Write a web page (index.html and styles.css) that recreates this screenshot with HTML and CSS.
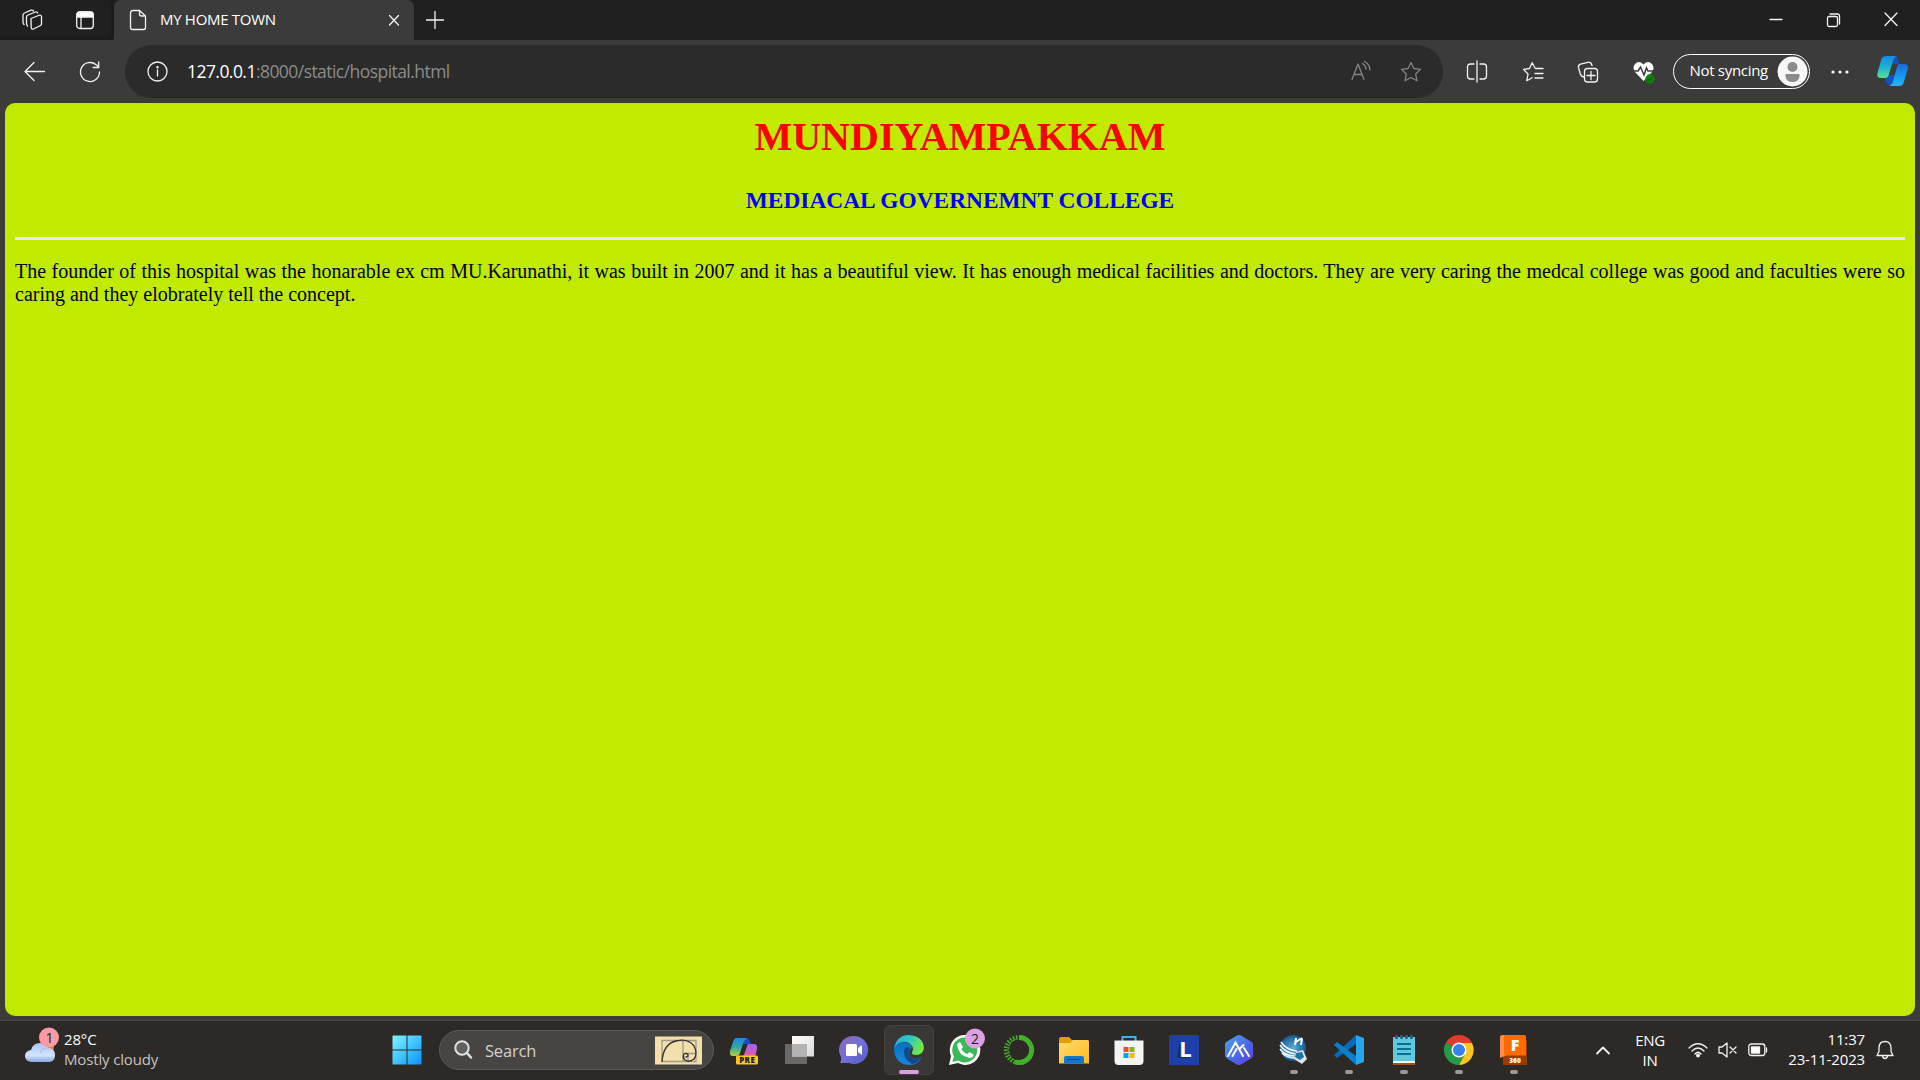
FILE: index.html
```html
<!DOCTYPE html>
<html lang="en">
<head>
<meta charset="utf-8">
<title>MY HOME TOWN</title>
<link rel="stylesheet" href="styles.css">
</head>
<body>
<div class="screen">
  <header class="tabstrip">
    <div class="strip-tools">
      <svg class="ic" width="24" height="24" viewBox="0 0 24 24"><path d="M10 10.500 17.500 7.500Q20 6.500 20.500 8.500V16Q20.500 17 19.500 17.500L12.500 21Q10.500 21.700 10.200 19.500ZM6.500 18Q5.500 17 5.500 15V9Q5.500 7.500 7 7L14.500 4Q16 3.500 16.700 5M3 16.500Q2 15.500 2 13.500V7Q2 5.500 3.500 5L10 2.200Q11.500 1.700 12.500 3"/></svg>
      <svg class="ic" width="20" height="20" viewBox="0 0 20 20"><rect x="1.700" y="2" width="16.600" height="16.500" rx="3"/><path d="M6 6v12"/><path class="solid" d="M2 7V4.500Q2 2 4.500 2h11Q18 2 18 4.500V7z"/></svg>
    </div>
    <div class="tab">
      <svg class="ic" width="18" height="22" viewBox="0 0 18 22"><path d="M4 1.500h6.500L16.500 7v11.500q0 2-2 2H3.500q-2 0-2-2V4q0-2.500 2.500-2.500zM10.500 1.500V5q0 2 2 2h4"/></svg>
      <span class="tab-title">MY HOME TOWN</span>
      <svg class="ic" width="12" height="12" viewBox="0 0 12 12"><path d="m1.500 1.500 9 9.500M10.500 1.500 1.500 11"/></svg>
    </div>
    <svg class="ic newtab" width="18" height="18" viewBox="0 0 18 18"><path d="M9 .5v17M.5 9h17"/></svg>
    <div class="window-buttons">
      <svg class="ic" width="14" height="14" viewBox="0 0 14 14"><path d="M1 6.500h12"/></svg>
      <svg class="ic" width="15" height="15" viewBox="0 0 15 15"><rect x="1.500" y="3.500" width="10" height="10" rx="1.500"/><path d="M4 1h7.500q2 0 2 2v8"/></svg>
      <svg class="ic" width="14" height="14" viewBox="0 0 14 14"><path d="m1 0 12 12.500M13 0 1 12.500"/></svg>
    </div>
  </header>

  <nav class="toolbar">
    <svg class="ic back" width="22" height="20" viewBox="0 0 22 20"><path d="M10 .5 1 9.500l9 9M1 9.500h19.500"/></svg>
    <svg class="ic refresh" width="22" height="22" viewBox="0 0 22 22"><path d="M20.500 11a9.500 9.500 0 1 1-3.300-7.200l2.300 2M19.700 1v5.500h-5.500"/></svg>
    <div class="address">
      <svg class="ic" width="22" height="22" viewBox="0 0 22 22"><circle cx="11.500" cy="10.500" r="9.500"/><path d="M11.500 9v6"/><circle class="solid" cx="11.500" cy="6.200" r=".6"/></svg>
      <div class="url"><span class="host">127.0.0.1</span>:8000/static/hospital.html</div>
      <svg class="ic dim read" width="22" height="22" viewBox="0 0 22 22"><path d="M2 18.500 8 3l6 15.500M4 13.500h8M12.500 2.500q3 1.500 3.500 5.500M14.500 .5q5 2.500 5.500 8.500"/></svg>
      <svg class="ic dim" width="22" height="22" viewBox="0 0 22 22"><path d="m11 1.500 2.900 6 6.600.900-4.800 4.600 1.200 6.700L11 16.500l-5.900 3.200 1.200-6.700L1.500 8.400l6.600-.900z"/></svg>
    </div>
    <div class="tools">
      <svg class="ic" width="22" height="22" viewBox="0 0 22 22"><path d="M8 3H4.500Q1.500 3 1.500 6v9q0 3 3 3H8M14 3h3.500q3 0 3 3v9q0 3-3 3H14M11 0v21"/></svg>
      <svg class="ic" width="22" height="22" viewBox="0 0 22 22"><path d="m13 7-2.800-5.200L7.500 7.500 1.500 8.400 6 13l-1.200 6.700 5.400-3M13.500 7.500H21M13 12.500h8M13 17h8"/></svg>
      <svg class="ic" width="22" height="22" viewBox="0 0 22 22"><rect x="7.500" y="7.500" width="13" height="13.500" rx="3"/><path d="M14 10.500v8M10 14.500h8M7 16Q4 15.500 3.300 13L1.500 6.500Q1 4 3.500 3.200L11 1.300q3-.600 4 3.200"/></svg>
      <svg class="heart" width="22" height="24" viewBox="0 0 22 24"><path fill="#fff" d="M10.500 21 2 12Q-1 7 2 4q4-4 8.500.5Q15 0 19 4q3 4 0 8z"/><path fill="none" stroke="#3b3b3b" stroke-width="1.500" d="M0 11h5l2.500-4 3.500 8 2.500-7 1.500 3H22"/><circle cx="17" cy="19" r="4.700" fill="#107c10"/><path d="m15 19 1.500 1.500 3-3" fill="none" stroke="#052"/></svg>
    </div>
    <div class="profile"><span>Not syncing</span>
      <svg width="31" height="31" viewBox="0 0 31 31"><circle cx="15.500" cy="15.500" r="15" fill="#f7f7f7"/><circle cx="15.500" cy="11" r="5" fill="#8b8b8b"/><path fill="#8b8b8b" d="M8.500 18h14v2.500q-1 5.500-7 5.500t-7-5.500z"/></svg>
    </div>
    <svg class="more" width="18" height="6" viewBox="0 0 18 6"><g fill="#fff"><circle cx="2" cy="3" r="1.600"/><circle cx="9" cy="3" r="1.600"/><circle cx="16" cy="3" r="1.600"/></g></svg>
    <svg class="copilot" width="32" height="30" viewBox="0 0 32 30">
      <defs>
        <linearGradient id="ca" x1="0" y1="0" x2="0" y2="1"><stop offset="0" stop-color="#1689e0"/><stop offset=".5" stop-color="#17b3d3"/><stop offset="1" stop-color="#63df8c"/></linearGradient>
        <linearGradient id="cb" x1="0" y1="0" x2="0" y2="1"><stop offset="0" stop-color="#1a6bdc"/><stop offset="1" stop-color="#18bcfa"/></linearGradient>
      </defs>
      <path fill="#1452c4" d="M8 19h10l-3 8q-1 2-3 2-3-1-4-6zM17 0q4 0 5 8h-7z"/>
      <path fill="url(#ca)" d="M9 0h11q-3 1-4 5l-4 13q-1 4-4 4H4q-5 0-3.500-5L4 4.500Q5 0 9 0z"/>
      <path fill="url(#cb)" d="M22 8h5q5 0 3.700 5L27 25.500Q26 30 22 30H12q3-1 4-5l4-14q.5-3 2-3z"/>
    </svg>
  </nav>

  <main class="page">
    <h1>MUNDIYAMPAKKAM</h1>
    <h3>MEDIACAL GOVERNEMNT COLLEGE</h3>
    <hr>
    <p>The founder of this hospital was the honarable ex cm MU.Karunathi, it was built in 2007 and it has a beautiful view. It has enough medical facilities and doctors. They are very caring the medcal college was good and faculties were so caring and they elobrately tell the concept.</p>
  </main>

  <footer class="taskbar">
    <div class="weather">
      <svg width="34" height="37" viewBox="0 0 34 37">
        <defs><linearGradient id="cl" x1="0" y1="0" x2="0" y2="1"><stop offset="0" stop-color="#a9c6f5"/><stop offset=".65" stop-color="#d5e3fb"/><stop offset="1" stop-color="#87a7e6"/></linearGradient></defs>
        <circle cx="23" cy="20" r="6" fill="#f47a16"/>
        <path fill="url(#cl)" d="M6 35q-6-1-6-6t6-6q2-7 9-7 6 0 8 5 7 0 7 7t-6 7z"/>
        <path d="M15 26q2-5 8-5" stroke="#9bbaf0" fill="none"/>
        <circle cx="24" cy="10.500" r="10" fill="#ff99a6"/>
        <text class="badge-text" x="24.500" y="15.500">1</text>
      </svg>
      <div class="weather-text"><span>28°C</span><span class="muted">Mostly cloudy</span></div>
    </div>

    <div class="center">
      <svg class="start" width="30" height="30" viewBox="0 0 30 30">
        <defs><linearGradient id="w" x1="0" y1="0" x2="1" y2="1"><stop offset="0" stop-color="#80f3ff"/><stop offset=".5" stop-color="#43c4ff"/><stop offset="1" stop-color="#0c92ff"/></linearGradient></defs>
        <path fill="url(#w)" d="M1 .5h13.500V14.500H.5V1zM15.500.5h13.500l.5.5v13.500h-14zM.5 15.500h14v14H1l-.5-.5zM15.500 15.500h14V29l-.5.500H15.500z"/>
      </svg>
      <div class="search">
        <svg width="19" height="20" viewBox="0 0 19 20"><circle cx="8" cy="8" r="6.700" fill="#625f5d" stroke="#dfe3e8" stroke-width="2"/><path d="m13 13 4 4.500" stroke="#dfe3e8" stroke-width="2.500" stroke-linecap="round"/></svg>
        <span>Search</span>
        <svg width="47" height="29" viewBox="0 0 47 29"><path fill="#f3dfaa" d="M0 .5h47v28H0z"/><path fill="none" stroke="#9d9b8c" stroke-width="1.300" d="M7 4.500h34v21H7zM28 4.500v21M28 17.500h13M33 17.500v8M28 21h5"/><path fill="none" stroke="#35322e" stroke-width="1.300" d="M7 26Q8 8 21 5 33 2 39 10q4 8 0 13-5 4-9 1-3-3-1-6 4-2 4 2l-2 1"/></svg>
      </div>

      <div class="app"><svg width="30" height="30" viewBox="0 0 30 30">
        <defs><linearGradient id="pa" x1="0" y1="0" x2="0" y2="1"><stop offset="0" stop-color="#2088e8"/><stop offset=".5" stop-color="#2fa6a6"/><stop offset="1" stop-color="#b9cf38"/></linearGradient><linearGradient id="pb" x1="0" y1="0" x2="0" y2="1"><stop offset="0" stop-color="#9b63ee"/><stop offset="1" stop-color="#ee5b9c"/></linearGradient></defs>
        <path fill="#194fc0" d="M14 3q7-1 8 6h-8z"/><path fill="url(#pa)" d="M8 3h11q-4 1-5 6l-3 9q-1 3-4 3H4q-4 0-3-5l3-9q1-4 4-4z"/><path fill="url(#pb)" d="M19 9h6q4 0 3 5l-2 8H12q3-1 4-5l2-6z"/>
        <rect x="7" y="20.500" width="22" height="9" rx="1.500" fill="#ffc61c"/><text class="pre" x="18.200" y="28">PRE</text></svg></div>
      <div class="app"><svg width="30" height="30" viewBox="0 0 30 30">
        <defs><linearGradient id="tv" x1="0" y1="0" x2="1" y2="1"><stop offset="0" stop-color="#fff"/><stop offset="1" stop-color="#d9d9d9"/></linearGradient></defs>
        <path fill="#6a6867" d="M1 9h22v20H1z"/><path fill="url(#tv)" d="M8 1h22v20.500H8z"/><path fill="#b3b3b3" d="M8 9h15v12.500H8z"/></svg></div>
      <div class="app"><svg width="30" height="30" viewBox="0 0 30 30">
        <defs><linearGradient id="ch" x1="0" y1="0" x2="1" y2="1"><stop offset="0" stop-color="#8d6ab0"/><stop offset=".5" stop-color="#7470d6"/><stop offset="1" stop-color="#5059c9"/></linearGradient></defs>
        <path fill="url(#ch)" d="M15 1a14 14 0 1 1-5 27H1q2-3 1-6A14 14 0 0 1 15 1z"/><rect x="7" y="9" width="11" height="12" rx="1.500" fill="#fff"/><path fill="#fff" d="m19 13 4-3v10l-4-3z"/></svg></div>
      <div class="app active"><svg width="30" height="30" viewBox="0 0 30 30">
        <defs><linearGradient id="ea" x1="0" y1="0" x2="1" y2=".4"><stop offset="0" stop-color="#29a9e6"/><stop offset=".5" stop-color="#2dc5c5"/><stop offset="1" stop-color="#73e64b"/></linearGradient><linearGradient id="eb" x1="0" y1="0" x2="0" y2="1"><stop offset="0" stop-color="#0870c3"/><stop offset="1" stop-color="#1689df"/></linearGradient></defs>
        <path fill="url(#eb)" d="M0 14Q1 6 10 7q7 1 8 6-6 3-2 9 5 3 12 0Q24 30 15 30 1 29 0 14z"/><path fill="#114a8b" d="M11 13q-4 9 7 16 6-1 10-7-7 3-12 0-4-4 0-9-3-2-5 0z"/>
        <path fill="url(#ea)" d="M0 13Q3 0 15 0q14 1 15 13-1 7-8 7-5 0-4-3 2-3 0-6Q14 6 8 7 3 8 0 13z"/></svg></div>
      <div class="app"><svg class="wide" width="36" height="38" viewBox="0 0 36 38">
        <path fill="#fff" d="M15 7a15 15 0 1 1-6 28l-9 2 2-9A15 15 0 0 1 15 7z"/><path fill="#3cb75a" d="M15 9.500A12.500 12.500 0 1 1 9 32.500L3.500 34 5 28.500A12.500 12.500 0 0 1 15 9.500z"/><path fill="#fff" d="m8 16 3-2 3 5-1.500 2q2 4 6 5l2-2 4 2.500q0 3-4 3.500Q9 28 8 16z"/>
        <circle cx="26" cy="10.500" r="10" fill="#dda0e5"/><text class="badge-text" x="26" y="15.500">2</text></svg></div>
      <div class="app"><svg width="30" height="30" viewBox="0 0 30 30"><path d="M15 2.500a12.500 12.500 0 1 1-4 24.300" fill="none" stroke="#43b02a" stroke-width="5"/><path d="M11 27A12.500 12.500 0 0 1 15 2.500" fill="none" stroke="#43b02a" stroke-width="4.500" stroke-dasharray="1.500 1.500"/><path d="M10 25A12 12 0 0 1 12 4" fill="none" stroke="#43b02a" stroke-dasharray="3 1"/></svg></div>
      <div class="app"><svg width="30" height="30" viewBox="0 0 30 30">
        <defs><linearGradient id="fo" x1="0" y1="0" x2="1" y2="1"><stop offset="0" stop-color="#ffdc70"/><stop offset="1" stop-color="#fdb91c"/></linearGradient></defs>
        <path fill="#e39d08" d="M0 4q0-2 2-2h8l3 3h8v6H0z"/><path fill="url(#fo)" d="M0 8h11l3-3h15l1 1v22.500H0z"/><path fill="#1377d1" d="M5 28.500V23q0-2 2-2h16q2 0 2 2v5.500z"/><path d="M8.500 24.500h13" stroke="#0a4da0"/></svg></div>
      <div class="app"><svg width="30" height="30" viewBox="0 0 30 30"><path d="M8.500 6V2h13v4" fill="none" stroke="#32b7f1" stroke-width="2"/><path fill="#f4f4f4" d="M.5 5.500h29V26q0 4-4 4H4.500q-4 0-4-4z"/><path fill="#f25022" d="M9.500 12h5v5h-5z"/><path fill="#7fba00" d="M15.500 12h5v5h-5z"/><path fill="#00a4ef" d="M9.500 18h5v5h-5z"/><path fill="#ffb900" d="M15.500 18h5v5h-5z"/></svg></div>
      <div class="app"><svg width="30" height="30" viewBox="0 0 30 30"><path fill="#1e3faa" d="M0 0h30v30H0z"/><path fill="#12333f" d="m11 6-3 16 3 1h10v-1H11z"/><text class="letter-l" x="16.500" y="22">L</text></svg></div>
      <div class="app"><svg width="30" height="30" viewBox="0 0 30 30">
        <defs><linearGradient id="ai" x1="0" y1="0" x2="1" y2="1"><stop offset="0" stop-color="#4aa3ec"/><stop offset=".6" stop-color="#4c65e8"/><stop offset="1" stop-color="#6838dc"/></linearGradient></defs>
        <path fill="url(#ai)" d="M13 .5q2-1 4 0l10 6q2 1 2 3v11q0 2-2 3l-10 6q-2 1-4 0l-10-6q-2-1-2-3v-11q0-2 2-3z"/><path d="M4 21 11.500 7.500 19 21M8.500 21l4-7M15.500 14l4-4M20 13l5 8" fill="none" stroke="#fff" stroke-width="2" stroke-linecap="round"/></svg></div>
      <div class="app run"><svg width="30" height="30" viewBox="0 0 30 30"><defs><radialGradient id="gl"><stop offset="0" stop-color="#54aee0"/><stop offset="1" stop-color="#17588f"/></radialGradient></defs><circle cx="14" cy="13" r="13" fill="url(#gl)"/><path d="M2 7q5 8 16 9M1 10q5 8 16 9M1 14q5 7 15 7M3 18q5 5 13 5" fill="none" stroke="#e9f2f7" stroke-width="1.700"/><path d="m17 3-1 7M23 3l-1 7M17 7l6-4" stroke="#fff" stroke-width="2"/><path fill="#dce4e8" d="m17 17 7-2 4 9-5 5-8-5z"/><path fill="#1c73aa" d="m17 18 6-1 2 5-4 3-5-3z"/></svg></div>
      <div class="app run"><svg width="30" height="30" viewBox="0 0 30 30"><path fill="#0a6ab5" d="M22 0 0 20l3 3L22 9z"/><path fill="#0a80cc" d="M22 30 0 10l3-3 19 14z"/><path fill="#27a5ef" d="m22 0 8 3v24l-8 3z"/></svg></div>
      <div class="app run"><svg width="30" height="30" viewBox="0 0 30 30"><path fill="#a75013" d="M4 25h22v5H4z"/><path fill="#fff" d="M4 25h22v3H4z"/><path fill="#60c7df" d="M4 2h22v24H4z"/><path d="M8 9h14M8 14h14M8 19h14" stroke="#08718f" stroke-width="2"/><path d="M7.500 0v4M12.500 0v4M17.500 0v4M22.500 0v4" stroke="#146a83" stroke-width="2.500"/></svg></div>
      <div class="app run"><svg width="30" height="30" viewBox="0 0 30 30"><path fill="#e33b2e" d="M15 15 2 7.500a15 15 0 0 1 26 0z"/><path fill="#259b48" d="M15 15 2 7.500A15 15 0 0 0 15 30l6-11z"/><path fill="#fcc61f" d="M15 8h13a15 15 0 0 1-13 22l6-11z"/><circle cx="15" cy="15" r="7.500" fill="#fff"/><circle cx="15" cy="15" r="6" fill="#3681ed"/></svg></div>
      <div class="app run"><svg width="30" height="30" viewBox="0 0 30 30"><path fill="#9b3b04" d="M4 21V5h24v25H4z"/><path fill="#ff9050" d="M1 2q0-2 3-2h4v20l-7 3z"/><path fill="#ff6b00" d="M5 0h20q2 0 2 2v18.500H5z"/><text class="fusion" x="16" y="16">F</text><text class="f360" x="16" y="28">360</text></svg></div>
    </div>

    <div class="tray">
      <svg class="ic bold" width="14" height="9" viewBox="0 0 14 9"><path d="m1 7.500 6-6 6 6"/></svg>
      <div class="lang">ENG<br>IN</div>
      <svg class="ic wifi" width="20" height="16" viewBox="0 0 20 16"><path d="M1 6q9-8.500 18 0M4 9q6-6 12 0M7 12q3-3.500 6 0"/><circle class="solid" cx="10" cy="13.500" r="1.300"/></svg>
      <svg class="ic" width="20" height="16" viewBox="0 0 20 16"><path d="M1 5h3l5-4v14l-5-4H1zM12 5l6 6M18 5l-6 6"/></svg>
      <svg class="ic battery" width="20" height="14" viewBox="0 0 20 14"><rect x=".8" y="1" width="16" height="11.500" rx="2.500"/><path d="M18.500 5v4"/><path class="solid" d="M3.500 4h8v6h-8z"/></svg>
      <div class="clock">11:37<br>23-11-2023</div>
      <svg class="ic" width="18" height="20" viewBox="0 0 18 20"><path d="M1 15.500h16l-2-4V8Q15 1.500 9 1.500T3 8v3.500zM6.500 16q.5 2.500 2.500 2.500t2.500-2.500"/></svg>
    </div>
  </footer>
</div>
</body>
</html>
```
FILE: styles.css
```css
* { box-sizing: border-box; }
body { margin: 0; background: #3b3b3b; font-family: "Open Sans", "Noto Sans", sans-serif; color: #fff; }
svg { display: block; flex: none; overflow: visible; }
.screen { width: 1920px; height: 1080px; display: flex; flex-direction: column; overflow: hidden; }
.ic { fill: none; stroke: #f2f2f2; stroke-width: 1.3; stroke-linecap: round; stroke-linejoin: round; }
.ic .solid { fill: #fff; }
.dim { stroke: #858585; }
.bold { stroke-width: 1.8; }

.tabstrip { height: 40px; flex: none; display: flex; align-items: center; background: #202020; }
.strip-tools { width: 114px; height: 40px; padding-left: 21px; display: flex; align-items: center; gap: 30px; border-radius: 0 0 6px 0; box-shadow: inset -2px -2px 3px #1b1b1b; }
.tab { width: 300px; height: 40px; padding: 0 14px 0 15px; display: flex; align-items: center; background: #3b3b3b; border-radius: 7px 7px 0 0; }
.tab-title { flex: 1; margin-left: 13px; padding-bottom: 2px; font-size: 15px; letter-spacing: -.3px; white-space: nowrap; }
.newtab { margin-left: 12px; }
.window-buttons { margin-left: auto; padding-right: 22px; display: flex; align-items: center; gap: 43px; }

.toolbar { height: 63px; flex: none; padding: 0 11px 0 24px; display: flex; align-items: center; background: #3b3b3b; }
.refresh { margin-left: 33px; }
.address { width: 1318px; height: 53px; margin-left: 24px; padding: 0 21px; display: flex; align-items: center; border-radius: 27px; background: #2b2b2b; }
.url { flex: 1; margin-left: 19px; padding-bottom: 2px; font-size: 17.5px; letter-spacing: -.55px; color: #8c8c8c; }
.host { color: #fff; }
.read { margin-right: 28px; }
.tools { margin-left: 23px; display: flex; align-items: center; gap: 33.5px; }
.profile { width: 137px; height: 35px; margin: 0 0 1px 18px; padding: 0 1px 0 16px; display: flex; align-items: center; justify-content: space-between; border: 1.5px solid #fff; border-radius: 18px; font-size: 15px; letter-spacing: -.3px; white-space: nowrap; }
.profile span { padding-bottom: 2px; }
.more { margin-left: 21px; }
.copilot { margin: 0 0 1px auto; }

.page { height: 913px; flex: none; margin: 0 5px; padding: 11px 10px 10px; border-radius: 10px; background: #c0eb00; color: #000; font: 20px/23px "Liberation Serif", serif; }
.page h1 { margin: 0; font-size: 40px; line-height: 46px; text-align: center; color: #f00; }
.page h3 { margin: 27px 0 24px; font-size: 23.4px; line-height: 26px; text-align: center; color: #00f; }
.page hr { height: 3px; margin: 0; border: 0; background: #e6e6fa; }
.page p { margin: 20px 0 0; text-align: justify; }

.taskbar { flex: 1; margin-top: 4px; display: flex; align-items: flex-start; border-top: 1px solid #494745; background: #2c2927; }
.weather { width: 379px; padding: 6px 0 0 25px; display: flex; gap: 5px; }
.weather-text { display: flex; flex-direction: column; margin-top: 2px; font-size: 15px; line-height: 20px; letter-spacing: -.15px; }
.muted { color: #c5c3c2; }
.badge-text { font-size: 14px; text-anchor: middle; fill: #222; }
.center { display: flex; align-items: center; height: 58px; }
.start { margin-left: 12.5px; }
.search { width: 275px; height: 40px; margin: 0 5px 0 17.5px; padding: 0 11px 0 14px; display: flex; align-items: center; border: 1px solid #5d5958; border-radius: 20px; background: #484442; }
.search span { flex: 1; margin-left: 12px; font-size: 16.5px; letter-spacing: -.2px; color: #d4d2d1; }
.app { position: relative; width: 50px; height: 50px; margin-right: 5px; display: flex; flex: none; align-items: center; justify-content: center; border-radius: 6px; }
.wide { margin: -7px 0 0 5px; }
.active { background: #3a3837; border: 1px solid #43403e; }
.active::after, .run::after { content: ""; position: absolute; left: 21px; bottom: 1px; width: 8px; height: 4px; border-radius: 2px; background: #9b9998; }
.active::after { left: 14px; bottom: 0; width: 20px; background: #d9a0dd; }
.pre { font-size: 8px; font-weight: 800; letter-spacing: .4px; text-anchor: middle; fill: #222; }
.letter-l { font-size: 22px; font-weight: 700; text-anchor: middle; fill: #fff; }
.fusion { font-size: 16px; font-weight: 800; text-anchor: middle; fill: #fff; }
.f360 { font-size: 6.5px; font-weight: 800; text-anchor: middle; fill: #fff; }
.tray { margin-left: auto; height: 58px; padding-right: 26px; display: flex; align-items: center; font-size: 15px; line-height: 20px; letter-spacing: -.3px; }
.lang { width: 32px; margin: 0 22px 0 24px; text-align: center; }
.wifi { margin-right: 10px; }
.battery { margin-left: 10px; }
.clock { width: 97px; margin: -2px 11px 0 0; text-align: right; white-space: nowrap; letter-spacing: -.15px; }
```
